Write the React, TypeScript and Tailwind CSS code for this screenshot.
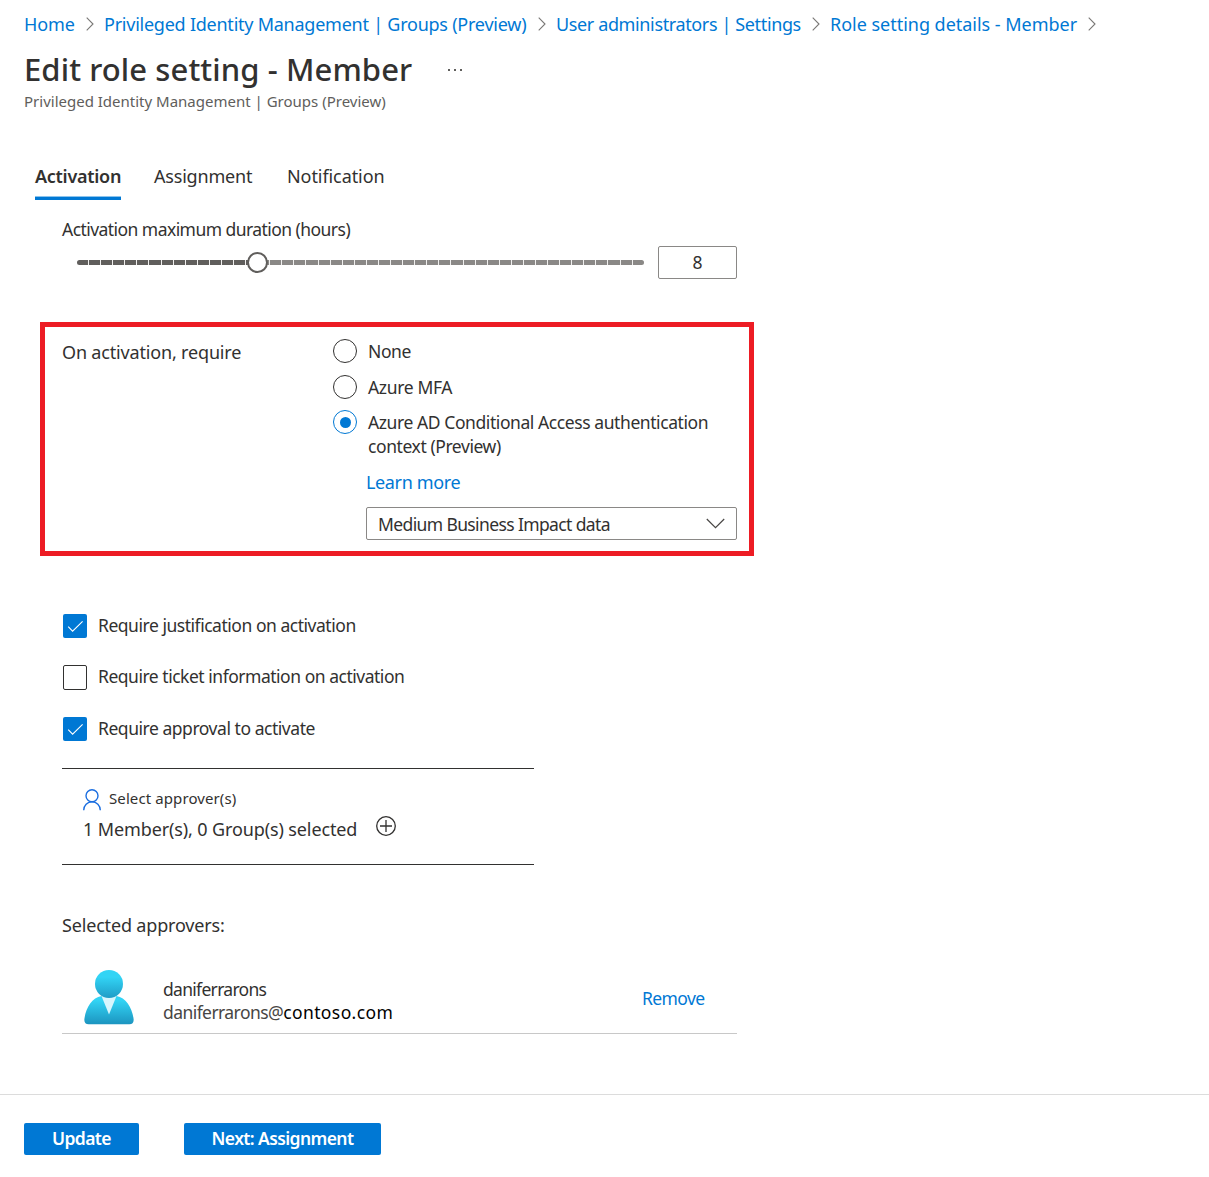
import React from "react";

function BreadcrumbChevron() {
  return (
    <svg width="8" height="14" viewBox="0 0 8 14" fill="none" stroke="#7a7876" strokeWidth="1.1" className="shrink-0">
      <path d="M0.7 0.7 7 7 0.7 13.3" />
    </svg>
  );
}

function Radio({ checked = false }: { checked?: boolean }) {
  return (
    <span
      className={
        "flex size-6 shrink-0 items-center justify-center rounded-full border " +
        (checked ? "border-[#0078d4]" : "border-[#323130]")
      }
    >
      {checked && <span className="size-[11px] rounded-full bg-[#0078d4]" />}
    </span>
  );
}

function Checkbox({ checked = false }: { checked?: boolean }) {
  return checked ? (
    <span className="flex size-6 shrink-0 items-center justify-center rounded-[2px] bg-[#0078d4]">
      <svg width="24" height="24" viewBox="0 0 24 24" fill="none" stroke="#fff" strokeWidth="1.1">
        <path d="M5.2 12.6 9.6 17.2 19.6 7.4" />
      </svg>
    </span>
  ) : (
    <span className="h-[25px] w-6 shrink-0 rounded-[2px] border border-[#323130]" />
  );
}

function Slider() {
  return (
    <div className="relative ml-[15px] h-[5px] w-[567px]">
      <div className="flex h-full gap-px overflow-hidden rounded-full bg-[#f0efee]">
        {Array.from({ length: 47 }, (_, i) => (
          <span key={i} className={"h-full flex-1 " + (i < 15 ? "bg-[#605e5c]" : "bg-[#8a8886]")} />
        ))}
      </div>
      <span className="absolute top-[-8px] left-[170px] size-[21px] rounded-full border-2 border-[#605e5c] bg-white" />
    </div>
  );
}

function Avatar() {
  return (
    <svg width="50" height="55" viewBox="0 0 50 55" className="mt-px shrink-0">
      <defs>
        <linearGradient id="head" x1="0" y1="0" x2="0" y2="1">
          <stop offset="0.25" stopColor="#32d4f5" />
          <stop offset="1" stopColor="#1f9cc6" />
        </linearGradient>
        <linearGradient id="body" x1="0" y1="0" x2="0" y2="1">
          <stop offset="0.15" stopColor="#32d4f5" />
          <stop offset="1" stopColor="#1c94bf" />
        </linearGradient>
      </defs>
      <path
        d="M17.5 26C8 27.5 1.8 38 0.4 49C0 52 1.6 54.3 4.6 54.3H45.4C48.4 54.3 50 52 49.6 49C48.2 38 42 27.5 32.5 26Z"
        fill="url(#body)"
      />
      <path d="M17.5 26H32.5L25 44.6Z" fill="#d8f6fd" />
      <circle cx="25" cy="14" r="14" fill="url(#head)" />
    </svg>
  );
}

export default function App() {
  return (
    <div className="flex h-[1177px] w-[1209px] flex-col bg-white font-['Noto_Sans',sans-serif] text-[17.5px] leading-6 whitespace-nowrap text-[#323130]">
      <nav className="mt-3 flex h-6 items-center pl-6 text-[18px] text-[#0078d4]">
        <a className="w-[62px] tracking-[-0.1px]">Home</a>
        <BreadcrumbChevron />
        <a className="ml-[10px] w-[434px] tracking-[-0.24px]">Privileged Identity Management | Groups (Preview)</a>
        <BreadcrumbChevron />
        <a className="ml-[10px] w-[256px] tracking-[-0.37px]">User administrators | Settings</a>
        <BreadcrumbChevron />
        <a className="ml-[10px] w-[258px] tracking-[-0.02px]">Role setting details - Member</a>
        <BreadcrumbChevron />
      </nav>

      <header className="mt-[13px] pl-6">
        <div className="flex h-10 items-center">
          <h1 className="w-[423px] text-[31px] leading-10 font-medium tracking-[0.09px]">Edit role setting - Member</h1>
          <svg width="17" height="4" viewBox="0 0 17 4" fill="#605e5c" className="mt-[2px]">
            <rect x="1" y="1" width="2" height="2" />
            <rect x="7" y="1" width="2" height="2" />
            <rect x="13" y="1" width="2" height="2" />
          </svg>
        </div>
        <p className="mt-[2px] text-[15px] leading-5 text-[#605e5c]">Privileged Identity Management | Groups (Preview)</p>
      </header>

      <div className="mt-[53px] flex h-9 pl-[35px] text-[18px]">
        <div className="flex w-[86px] flex-col justify-between font-semibold tracking-[-0.28px]">
          <span>Activation</span>
          <span className="h-1 border-t border-[#8cc3ec] bg-[#0078d4]" />
        </div>
        <span className="ml-[33px] w-[133px] tracking-[-0.2px]">Assignment</span>
        <span className="tracking-[-0.08px]">Notification</span>
      </div>

      <main className="flex flex-col">
        <div className="mt-[17px] ml-[62px] tracking-[-0.55px]">Activation maximum duration (hours)</div>
        <div className="mt-[5px] ml-[62px] flex h-[33px] w-[675px] items-center justify-between">
          <Slider />
          <div className="flex h-[33px] w-[79px] items-center justify-center rounded-[2px] border border-[#8a8886] pb-[2px]">
            8
          </div>
        </div>

        <section className="mt-[43px] ml-10 flex h-[234px] w-[714px] border-[5px] border-[#ed1c24]">
          <div className="mt-[13px] ml-[17px] w-[271px] text-[18px] tracking-[-0.17px]">On activation, require</div>
          <div className="mt-3 flex flex-1 flex-col">
            <label className="flex h-6 gap-[11px]">
              <Radio />
              <span className="tracking-[-0.4px]">None</span>
            </label>
            <label className="mt-3 flex h-6 gap-[11px]">
              <Radio />
              <span className="tracking-[-0.35px]">Azure MFA</span>
            </label>
            <label className="mt-[11px] flex h-12 gap-[11px]">
              <Radio checked />
              <span className="tracking-[-0.42px]">
                Azure AD Conditional Access authentication
                <br />
                context (Preview)
              </span>
            </label>
            <a className="mt-3 ml-[33px] text-[18px] tracking-[-0.36px] text-[#0078d4]">Learn more</a>
            <div className="mt-[13px] ml-[33px] flex h-[33px] w-[371px] items-center justify-between rounded-[2px] border border-[#8a8886] pr-[11px] pl-[11px]">
              <span className="mt-px tracking-[-0.62px]">Medium Business Impact data</span>
              <svg width="19" height="11" viewBox="0 0 19 11" fill="none" stroke="#484644" strokeWidth="1.2">
                <path d="M0.8 1 9.5 9.6 18.2 1" />
              </svg>
            </div>
          </div>
        </section>

        <section className="mt-[58px] ml-[63px] flex flex-col">
          <label className="flex h-6 items-start gap-[11px] tracking-[-0.47px]">
            <Checkbox checked />
            <span className="-mt-px">Require justification on activation</span>
          </label>
          <label className="mt-[27px] flex h-[25px] items-start gap-[11px] tracking-[-0.48px]">
            <Checkbox />
            <span className="-mt-px">Require ticket information on activation</span>
          </label>
          <label className="mt-[27px] flex h-6 items-start gap-[11px] tracking-[-0.46px]">
            <Checkbox checked />
            <span className="-mt-px">Require approval to activate</span>
          </label>
        </section>

        <section className="mt-[27px] ml-[62px] h-[97px] w-[472px] border-y border-[#323130] pl-[21px]">
          <div className="mt-[19px] flex h-[22px] text-[15px] leading-5">
            <svg width="18" height="22" viewBox="0 0 18 22" fill="none" stroke="#1b6ee0" strokeWidth="1.4" className="mr-2 mt-px shrink-0">
              <circle cx="9" cy="6.8" r="6" />
              <path d="M0.7 21.2A8.3 8.4 0 0 1 17.3 21.2" />
            </svg>
            <span className="tracking-[0.1px]">Select approver(s)</span>
          </div>
          <div className="mt-[7px] flex text-[18px] leading-6 tracking-[-0.12px]">
            <span className="w-[293px]">1 Member(s), 0 Group(s) selected</span>
            <svg width="20" height="20" viewBox="0 0 20 20" fill="none" stroke="#323130" strokeWidth="1.3" className="-mt-px">
              <circle cx="10" cy="10" r="9.3" />
              <path d="M10 4V16M4 10H16" />
            </svg>
          </div>
        </section>

        <div className="mt-12 ml-[62px] text-[18px] tracking-[-0.17px]">Selected approvers:</div>
        <div className="mt-[32px] ml-[62px] flex h-[65px] w-[675px] border-b border-[#c8c8c8] pl-[22px]">
          <Avatar />
          <div className="mt-[9px] ml-[29px] w-[480px] leading-[23px]">
            <div className="tracking-[-0.7px]">daniferrarons</div>
            <div>
              <span className="tracking-[-0.57px] text-[#484644]">daniferrarons@</span>
              <span className="tracking-[0.4px] text-black">contoso.com</span>
            </div>
          </div>
          <a className="mt-[17px] -ml-px tracking-[-0.6px] text-[#0078d4]">Remove</a>
        </div>
      </main>

      <footer className="mt-[60px] flex flex-1 gap-[45px] border-t border-[#dcdcdc] pt-7 pl-6 leading-[30px] font-semibold text-white">
        <button className="h-8 w-[115px] rounded-[2px] bg-[#0078d4] pb-[4px] tracking-[-0.6px]">Update</button>
        <button className="h-8 w-[197px] rounded-[2px] bg-[#0078d4] pb-[4px] tracking-[-0.6px]">Next: Assignment</button>
      </footer>
    </div>
  );
}
